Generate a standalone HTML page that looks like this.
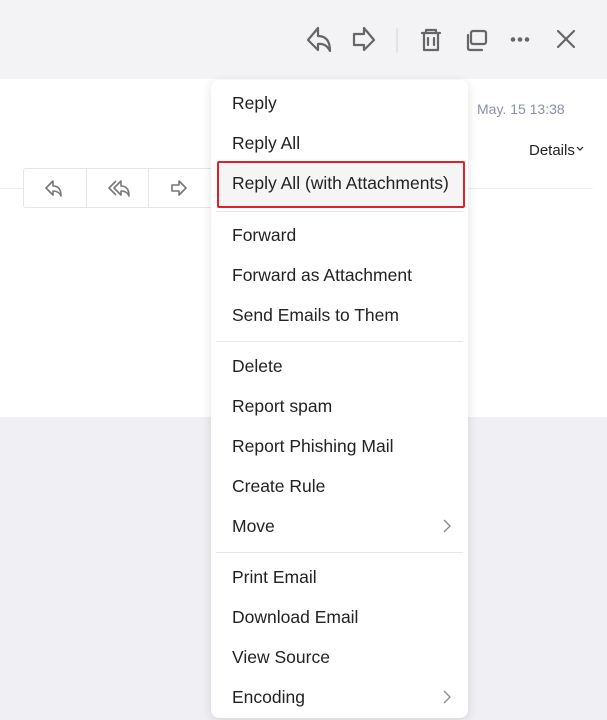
<!DOCTYPE html>
<html><head><style>
*{margin:0;padding:0;box-sizing:border-box}
body{width:607px;height:720px;overflow:hidden;background:#efeff4;font-family:"Liberation Sans",sans-serif;position:relative}
.top{position:absolute;left:0;top:0;width:607px;height:79px;background:#f3f3f6}
.panel{position:absolute;left:0;top:79px;width:607px;height:338px;background:#fff}
.ic{position:absolute}
.menu{position:absolute;left:211px;top:80px;width:257px;height:638px;background:#fff;border-radius:8px;box-shadow:0 2px 10px rgba(0,0,0,.12)}
.it{position:absolute;left:21px;font-size:17.5px;color:#222;line-height:20px}
.sep{position:absolute;left:5px;width:247px;height:1px;background:#e8e8ec}
.arr{position:absolute;right:17px}
</style></head><body>
<div class="top"></div>
<div class="panel"></div>
<svg class="ic" style="left:300px;top:20px" width="300" height="40" viewBox="0 0 300 40" fill="none" stroke="#666" stroke-width="2.2" stroke-linejoin="round" stroke-linecap="round">
<path d="M18 8 L8 20 L18 30 L18 24 Q26 23 30 31 Q30 16 18 16 Z"/>
<path d="M54 14 L64 14 L64 8 L74 20 L64 30 L64 25 L54 25 Z"/>
<line x1="97" y1="9" x2="97" y2="32" stroke="#ddd" stroke-width="1.5"/>
<path d="M122 13 H140 M126 13 V10 H136 V13 M124 13 V30 H138 V13 M128 18 V25 M134 18 V25"/>
<path d="M168 15 V28 Q168 30 170 30 H182"/>
<rect x="171" y="11" width="15" height="13" rx="2"/>
<circle cx="213" cy="19.5" r="1.2" fill="#666"/><circle cx="220" cy="19.5" r="1.2" fill="#666"/><circle cx="227" cy="19.5" r="1.2" fill="#666"/>
<path d="M258 11 L274 27 M274 11 L258 27"/>
</svg>
<div style="position:absolute;left:477px;top:101px;font-size:14px;color:#8a90a8">May. 15 13:38</div>
<div style="position:absolute;left:529px;top:142px;font-size:15px;color:#222">Details</div>
<svg class="ic" style="left:576px;top:146px" width="8" height="6"><path d="M1 1 L4 4 L7 1" fill="none" stroke="#222" stroke-width="1.2"/></svg>
<div style="position:absolute;left:0;top:188px;width:593px;height:1px;background:#eee"></div>
<div style="position:absolute;left:23px;top:168px;width:200px;height:40px;border:1px solid #e6e6e6;border-radius:3px;background:#fff"></div>
<div style="position:absolute;left:86px;top:169px;width:1px;height:38px;background:#e6e6e6"></div>
<div style="position:absolute;left:148px;top:169px;width:1px;height:38px;background:#e6e6e6"></div>
<svg class="ic" style="left:40px;top:176px" width="160" height="24" fill="none" stroke="#777" stroke-width="1.6" stroke-linejoin="round">
<path d="M13 5 L6 12 L13 19 V15 Q19 15 21 20 Q21 10 13 10 Z"/>
<path d="M81 5 L74 12 L81 19 V15 Q87 15 89 20 Q89 10 81 10 Z M76 5 L69 12 L76 19"/>
<path d="M132 9 H139 V5 L146 12 L139 19 V15 H132 Z"/>
</svg>
<div class="menu">
<div class="it" style="top:13px">Reply</div>
<div class="it" style="top:53px">Reply All</div>
<div style="position:absolute;left:6px;top:81px;width:248px;height:47px;border:2px solid #e0202a;border-radius:2px;background:#f5f5f5"></div>
<div class="it" style="top:93px">Reply All (with Attachments)</div>
<div class="sep" style="top:131px"></div>
<div class="it" style="top:145px">Forward</div>
<div class="it" style="top:185px">Forward as Attachment</div>
<div class="it" style="top:225px">Send Emails to Them</div>
<div class="sep" style="top:261px"></div>
<div class="it" style="top:276px">Delete</div>
<div class="it" style="top:316px">Report spam</div>
<div class="it" style="top:356px">Report Phishing Mail</div>
<div class="it" style="top:396px">Create Rule</div>
<div class="it" style="top:436px">Move</div>
<svg class="arr" style="top:439px" width="8" height="14"><path d="M1 1 L7 7 L1 13" fill="none" stroke="#888" stroke-width="1.3"/></svg>
<div class="sep" style="top:472px"></div>
<div class="it" style="top:487px">Print Email</div>
<div class="it" style="top:527px">Download Email</div>
<div class="it" style="top:567px">View Source</div>
<div class="it" style="top:607px">Encoding</div>
<svg class="arr" style="top:610px" width="8" height="14"><path d="M1 1 L7 7 L1 13" fill="none" stroke="#888" stroke-width="1.3"/></svg>
</div>
</body></html>
